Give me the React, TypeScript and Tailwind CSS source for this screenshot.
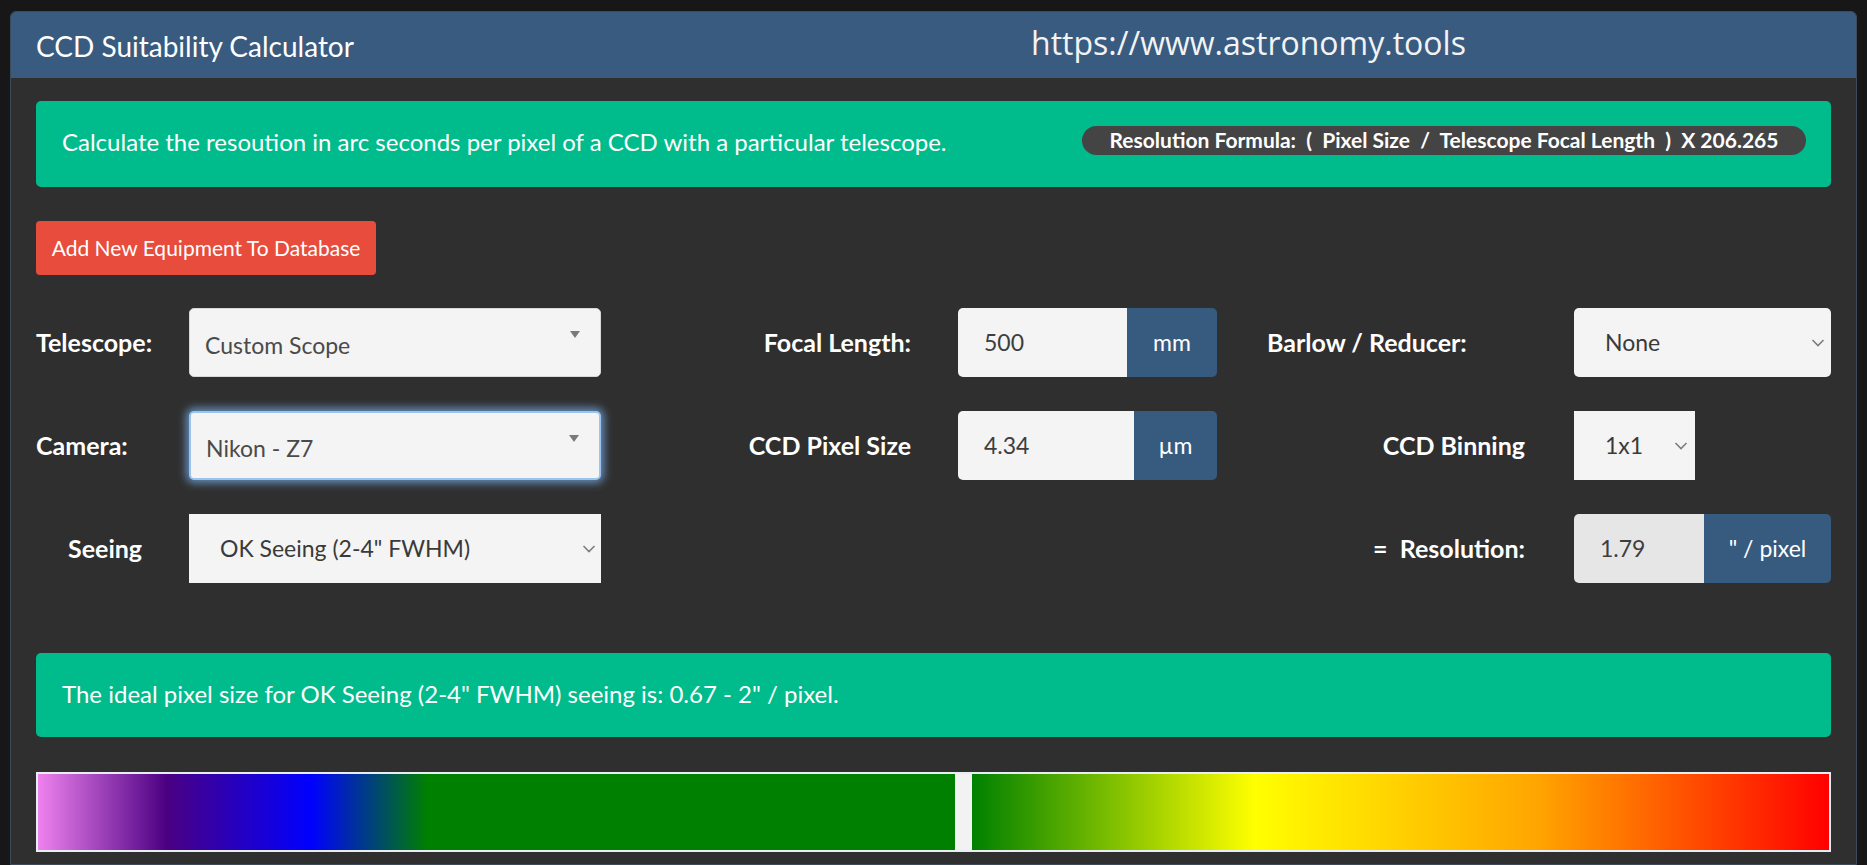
const lato = "font-['Lato','Noto_Sans',sans-serif]"

function TriangleSelect({ value, focused }: { value: string; focused?: boolean }) {
  return (
    <div
      className={`relative flex h-full items-center rounded-[5px] bg-[#f4f4f4] pl-[15px] text-[23px] text-[#4a4a4a] ${
        focused ? 'border-2 border-[#9cc3ee] shadow-[0_0_8px_3px_rgba(120,175,235,0.75)]' : 'border border-[#d8d8d8]'
      }`}
    >
      <span className="mt-[6px]">{value}</span>
      <svg className="absolute right-[20px] top-[22px]" width="10" height="7" viewBox="0 0 10 7">
        <path d="M0 0 L10 0 L5 7 Z" fill="#7a7a7a" />
      </svg>
    </div>
  )
}

function ChevronSelect({ value, rounded, chevronRight = 10 }: { value: string; rounded?: boolean; chevronRight?: number }) {
  return (
    <div
      className={`relative flex h-full items-center bg-[#f4f4f4] pl-[31px] text-[23px] text-[#3a3a3a] ${
        rounded ? 'rounded-[5px]' : ''
      }`}
    >
      <span>{value}</span>
      <svg
        className="absolute top-1/2 -translate-y-1/2"
        style={{ right: chevronRight }}
        width="14"
        height="9"
        viewBox="0 0 14 9"
      >
        <path d="M1.5 1.5 L7 7 L12.5 1.5" fill="none" stroke="#7d7d7d" strokeWidth="1.6" />
      </svg>
    </div>
  )
}

function AddonInput({ value, unit, inputWidth, readOnly }: { value: string; unit: string; inputWidth: string; readOnly?: boolean }) {
  return (
    <div className="flex h-full overflow-hidden rounded-[5px] text-[23px]">
      <div
        className={`flex items-center pl-[26px] text-[#3e3e3e] ${inputWidth} ${readOnly ? 'bg-[#e6e6e6]' : 'bg-[#f4f4f4]'}`}
      >
        {value}
      </div>
      <div className="flex flex-1 items-center justify-center bg-[#375a7f] text-white">{unit}</div>
    </div>
  )
}

export default function App() {
  return (
    <div className={`min-h-[865px] bg-[#171717] px-[10px] pt-[11px] ${lato}`}>
      <div className="h-[854px] overflow-hidden rounded-t-[6px] border border-[#3c4a5a] bg-[#2f2f2f]">
        <div className="relative flex h-[66px] items-center bg-[#395b80] pl-[25px] text-[28px] text-white">
          <span className="mt-[2px]">CCD Suitability Calculator</span>
          <span className="absolute left-[1020px] top-[15px] font-['Open_Sans',sans-serif] text-[32px] leading-none text-[#f3f3f3]">
            https://www.astronomy.tools
          </span>
        </div>

        <div className="px-[25px] pt-[23px]">
          <div className="flex h-[86px] items-center justify-between rounded-[5px] bg-[#00bc8c] pl-[26px] pr-[25px] text-[24px] text-white">
            <span className="mb-[4px]">Calculate the resoution in arc seconds per pixel of a CCD with a particular telescope.</span>
            <span className="mb-[8px] flex h-[29px] w-[724px] items-center justify-center whitespace-pre rounded-full bg-[#444444] text-[21px] font-bold text-white">
              {'Resolution Formula:  (  Pixel Size  /  Telescope Focal Length  )  X 206.265'}
            </span>
          </div>

          <button className="mt-[34px] flex h-[54px] w-[340px] items-center justify-center rounded-[4px] bg-[#e74c3c] text-[21px] text-white">
            Add New Equipment To Database
          </button>

          <div className="mt-[33px] grid grid-cols-[153px_412px_357px_259px_357px_257px] grid-rows-[69px_69px_69px] gap-y-[34px] text-[25px] font-bold text-white">
            <div className="flex items-center">Telescope:</div>
            <div className="font-normal">
              <TriangleSelect value="Custom Scope" />
            </div>
            <div className="flex items-center justify-end pr-[47px]">Focal Length:</div>
            <div className="font-normal">
              <AddonInput value="500" unit="mm" inputWidth="w-[169px]" />
            </div>
            <div className="flex items-center pl-[50px]">Barlow / Reducer:</div>
            <div className="font-normal">
              <ChevronSelect value="None" rounded chevronRight={6} />
            </div>

            <div className="flex items-center">Camera:</div>
            <div className="font-normal">
              <TriangleSelect value="Nikon - Z7" focused />
            </div>
            <div className="flex items-center justify-end pr-[47px]">CCD Pixel Size</div>
            <div className="font-normal">
              <AddonInput value="4.34" unit="µm" inputWidth="w-[176px]" />
            </div>
            <div className="flex items-center justify-end pr-[49px]">CCD Binning</div>
            <div className="w-[121px] font-normal">
              <ChevronSelect value="1x1" chevronRight={7} />
            </div>

            <div className="flex items-center pl-[32px]">Seeing</div>
            <div className="font-normal">
              <ChevronSelect value={'OK Seeing (2-4" FWHM)'} chevronRight={5} />
            </div>
            <div />
            <div />
            <div className="flex items-center justify-end whitespace-pre pr-[49px]">{'=  Resolution:'}</div>
            <div className="font-normal">
              <AddonInput value="1.79" unit={'" / pixel'} inputWidth="w-[130px]" readOnly />
            </div>
          </div>

          <div className="mt-[70px] flex h-[84px] items-center rounded-[5px] bg-[#00bc8c] pl-[26px] text-[24px] text-white">
            <span className="mb-[2px]">The ideal pixel size for OK Seeing (2-4" FWHM) seeing is: 0.67 - 2" / pixel.</span>
          </div>

          <div className="mt-[35px] flex h-[80px] border-2 border-[#e8eef4]">
            <div className="w-[390px] bg-[linear-gradient(to_right,#ee82ee_0%,#4b0082_33%,#0000ff_70%,#008000_100%)]" />
            <div className="flex-1 bg-[#008000]" />
            <div className="w-[17px] bg-[#f2f2f2]" />
            <div className="w-[857px] bg-[linear-gradient(to_right,#008000_0%,#ffff00_33%,#ffa500_66%,#ff0000_100%)]" />
          </div>
        </div>
      </div>
    </div>
  )
}
